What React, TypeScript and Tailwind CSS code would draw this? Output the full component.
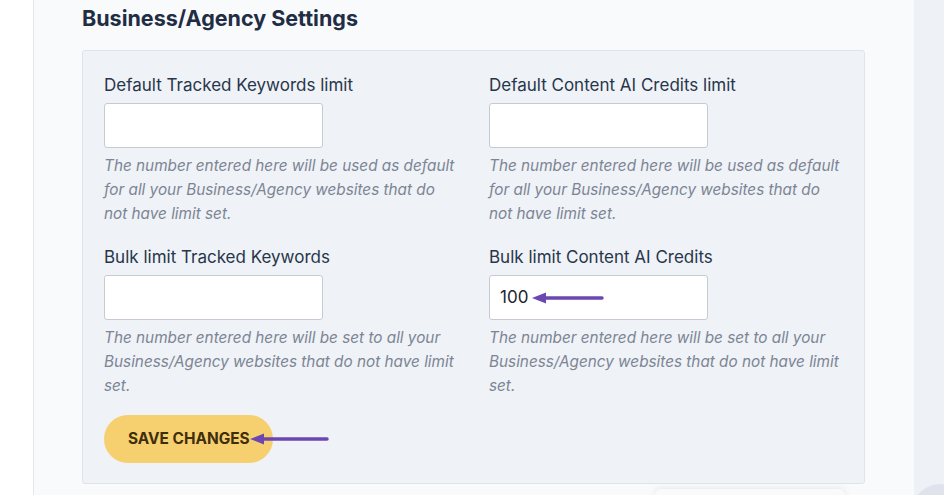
import React from "react";

const font = { fontFamily: "Inter, 'Noto Sans', 'Liberation Sans', sans-serif" };

function Arrow({ width }: { width: number }) {
  return (
    <svg width={width} height="14" viewBox={`0 0 ${width} 14`} className="shrink-0">
      <path d={`M12 7 H${width - 2}`} stroke="#6d47b1" strokeWidth="3.5" strokeLinecap="round" />
      <path d="M0 7 L14 1.5 L14 12.5 Z" fill="#6d47b1" />
    </svg>
  );
}

function Field({
  label,
  help,
  value,
}: {
  label: string;
  help: string;
  value?: string;
}) {
  return (
    <div className="flex flex-col">
      <label className="text-[17px] leading-6 text-[#27364b]">{label}</label>
      <div className="mt-[6px] w-[219px] h-[45px] bg-white border border-[#c6cbd3] rounded-[3px] flex items-center pl-[10px]">
        {value && (
          <>
            <span className="text-[17px] text-[#1d2433]">{value}</span>
            <span className="ml-[4px] mt-[1px]">
              <Arrow width={72} />
            </span>
          </>
        )}
      </div>
      <p className="mt-[6px] w-[355px] text-[15.3px] leading-6 italic text-[#7c8594]">{help}</p>
    </div>
  );
}

export default function App() {
  return (
    <div style={font} className="relative w-[944px] h-[495px] overflow-hidden flex bg-white">
      <div className="w-[34px] bg-white border-r border-[#e4e7ec]" />
      <div className="flex-1 bg-[#f9fafc] pl-[48px] pt-[4px]">
        <h2 className="text-[21.5px] leading-7 font-bold text-[#1f2d45]">Business/Agency Settings</h2>
        <div className="mt-[18px] w-[783px] bg-[#eff2f7] border border-[#e0e4ea] rounded-[3px] pl-[21px] pt-[22px] pb-[20px]">
          <div className="grid grid-cols-[385px_1fr] gap-y-[19px]">
            <Field
              label="Default Tracked Keywords limit"
              help="The number entered here will be used as default for all your Business/Agency websites that do not have limit set."
            />
            <Field
              label="Default Content AI Credits limit"
              help="The number entered here will be used as default for all your Business/Agency websites that do not have limit set."
            />
            <Field
              label="Bulk limit Tracked Keywords"
              help="The number entered here will be set to all your Business/Agency websites that do not have limit set."
            />
            <Field
              label="Bulk limit Content AI Credits"
              value="100"
              help="The number entered here will be set to all your Business/Agency websites that do not have limit set."
            />
          </div>
          <div className="mt-[17px] flex items-center">
            <button className="h-[48px] w-[169px] rounded-full bg-[#f6d06f] text-[15.4px] font-bold text-[#3f2e0c] flex items-center pl-[24px]">
              SAVE CHANGES
            </button>
            <span className="-ml-[23px]">
              <Arrow width={79} />
            </span>
          </div>
        </div>
      </div>
      <div className="w-[30px] bg-[#eef1f6]" />
      <div className="absolute left-[655px] top-[489px] w-[190px] h-[20px] rounded-md bg-[#f9fafc] shadow-[0_-1px_6px_rgba(0,0,0,0.08)]" />
      <div className="absolute left-[912px] top-[484px] w-[56px] h-[56px] rounded-full bg-[#dfe4ec]" />
    </div>
  );
}
